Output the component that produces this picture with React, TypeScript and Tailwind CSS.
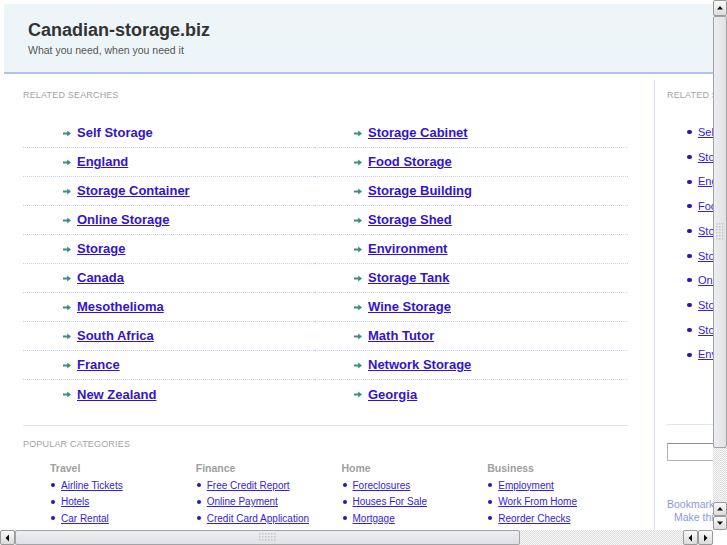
const leftLinks = ['Self Storage', 'England', 'Storage Container', 'Online Storage', 'Storage', 'Canada', 'Mesothelioma', 'South Africa', 'France', 'New Zealand']
const rightLinks = ['Storage Cabinet', 'Food Storage', 'Storage Building', 'Storage Shed', 'Environment', 'Storage Tank', 'Wine Storage', 'Math Tutor', 'Network Storage', 'Georgia']

const sideLinks = ['Self Storage', 'Storage Cabinet', 'England', 'Food Storage', 'Storage Container', 'Storage Building', 'Online Storage', 'Storage Shed', 'Storage', 'Environment']

const categories = [
  { title: 'Travel', items: ['Airline Tickets', 'Hotels', 'Car Rental'] },
  { title: 'Finance', items: ['Free Credit Report', 'Online Payment', 'Credit Card Application'] },
  { title: 'Home', items: ['Foreclosures', 'Houses For Sale', 'Mortgage'] },
  { title: 'Business', items: ['Employment', 'Work From Home', 'Reorder Checks'] },
]

function Arrow() {
  return (
    <svg width="8" height="7" viewBox="0 0 8 7" className="mr-[6px] shrink-0">
      <path d="M0 2.6h4.2V0.6L8 3.5 4.2 6.4V4.4H0z" fill="#3a8d83" />
    </svg>
  )
}

function Grip({ vertical }: { vertical?: boolean }) {
  const cols = vertical ? 3 : 6
  const rows = vertical ? 6 : 3
  return (
    <svg width={cols * 3} height={rows * 3} className="opacity-70">
      {Array.from({ length: cols * rows }).map((_, i) => (
        <rect key={i} x={(i % cols) * 3} y={Math.floor(i / cols) * 3} width="1.5" height="1.5" fill="#b8b8b8" />
      ))}
    </svg>
  )
}

function ScrollButton({ dir, className = '' }: { dir: 'up' | 'down' | 'left' | 'right'; className?: string }) {
  const paths = {
    up: 'M1 5h6L4 1.5z',
    down: 'M1 2h6L4 5.5z',
    left: 'M5 0.5v7L1.5 4z',
    right: 'M2 0.5v7L5.5 4z',
  }
  const vert = dir === 'up' || dir === 'down'
  return (
    <div
      className={`flex items-center justify-center rounded-[2px] border border-[#9a9a9a] bg-gradient-to-b from-[#fbfbfb] to-[#dcdcdc] ${className}`}
    >
      <svg width={vert ? 8 : 7} height={8} viewBox={vert ? '0 0 8 7' : '0 0 7 8'}>
        <path d={paths[dir]} fill="#111" />
      </svg>
    </div>
  )
}

const track = 'bg-[repeating-conic-gradient(#dedede_0_25%,#f7f7f7_0_50%)] bg-[length:2px_2px]'

function Page() {
  return (
    <div className="w-[960px] pl-[4px] pt-[4px]">
      <div className="h-[70px] border-b-2 border-[#aec4ea] bg-[#eef5f8] pl-[24px] pt-[15px]">
        <div className="text-[18px] font-bold leading-[22px] text-[#333]">Canadian-storage.biz</div>
        <div className="mt-[3px] text-[10.5px] leading-[13px] text-[#555]">What you need, when you need it</div>
      </div>

      <div className="mt-[6px] flex">
        <div className="w-[651px] border-r border-[#dae4f3] pb-[40px] pl-[19px]">
          <div className="pt-[9px] text-[9px] leading-[12px] tracking-[0.02em] text-[#a3a3a3]">RELATED SEARCHES</div>
          <div className="mt-[18px] grid w-[605px] grid-cols-[291px_314px]">
            {leftLinks.map((l, i) =>
              [l, rightLinks[i]].map((text, j) => (
                <div
                  key={`${i}-${j}`}
                  className={`box-border flex h-[29px] items-center pl-[40px] ${i < leftLinks.length - 1 ? 'border-b border-dotted border-[#c4d4ec]' : ''}`}
                >
                  <Arrow />
                  <a
                    href="#"
                    className={`text-[13px] font-bold text-[#3314cc] ${i === 0 && j === 0 ? 'no-underline' : 'underline'}`}
                  >
                    {text}
                  </a>
                </div>
              )),
            )}
          </div>
          <div className="mt-[16px] w-[605px] border-t border-[#dde7f0]" />
          <div className="pt-[12px] text-[9px] leading-[12px] tracking-[0.02em] text-[#a3a3a3]">POPULAR CATEGORIES</div>
          <div className="mt-[11px] grid w-[610px] grid-cols-4 pl-[27px]">
            {categories.map(c => (
              <div key={c.title}>
                <div className="text-[10.5px] font-bold leading-[14px] text-[#a0a0a0]">{c.title}</div>
                <div className="mt-[2px]">
                  {c.items.map(item => (
                    <div key={item} className="flex h-[16.5px] items-center">
                      <span className="ml-[1px] mr-[6px] h-[4px] w-[4px] rounded-full bg-[#2a15b8]" />
                      <a href="#" className="text-[10px] text-[#3322dd] underline">
                        {item}
                      </a>
                    </div>
                  ))}
                </div>
              </div>
            ))}
          </div>
        </div>

        <div className="w-[260px] pl-[12px]">
          <div className="pt-[9px] text-[9px] leading-[12px] tracking-[0.02em] text-[#a3a3a3]">RELATED SEARCHES</div>
          <div className="mt-[19px]">
            {sideLinks.map((l, i) => (
              <div key={i} className="flex h-[24.7px] items-center pl-[20px]">
                <span className="mr-[6px] h-[4px] w-[5px] rounded-full bg-[#2a15b8]" />
                <a href="#" className="text-[11px] text-[#3322dd] underline">
                  {l}
                </a>
              </div>
            ))}
          </div>
          <div className="mt-[57px] w-[230px] border-t border-[#dde7f0]" />
          <div className="mt-[18px] h-[18px] w-[200px] border border-[#b3b3b3] border-t-[#8f8f8f] bg-white" />
          <div className="mt-[37px] text-[10.5px] leading-[13px] text-[#8b9bd9]">
            <div>Bookmark this page</div>
            <div className="pl-[7px]">Make this your homepage</div>
          </div>
        </div>
      </div>
    </div>
  )
}

export default function App() {
  return (
    <div className="flex h-[545px] w-[727px] flex-col overflow-hidden bg-white font-['Liberation_Sans',Arial,sans-serif]">
      <div className="flex min-h-0 flex-1">
        <div className="min-w-0 flex-1 overflow-hidden">
          <Page />
        </div>
        <div className={`flex w-[14px] flex-col ${track}`}>
          <ScrollButton dir="up" className="h-[16px]" />
          <div className="flex h-[432px] items-center justify-center rounded-[2px] border border-[#a3a3a3] bg-gradient-to-r from-[#eceef1] to-[#dfe1e5]">
            <Grip vertical />
          </div>
          <div className="flex-1" />
          <ScrollButton dir="up" className="h-[14px]" />
          <ScrollButton dir="down" className="h-[14px]" />
        </div>
      </div>
      <div className="flex h-[15px]">
        <div className={`flex w-[713px] ${track}`}>
          <ScrollButton dir="left" className="w-[15px]" />
          <div className="flex w-[505px] items-center justify-center rounded-[2px] border border-[#a3a3a3] bg-gradient-to-b from-[#eceef1] to-[#dfe1e5]">
            <Grip />
          </div>
          <div className="flex-1" />
          <ScrollButton dir="left" className="w-[15px]" />
          <ScrollButton dir="right" className="w-[15px]" />
        </div>
        <div className="w-[14px] bg-white" />
      </div>
    </div>
  )
}
